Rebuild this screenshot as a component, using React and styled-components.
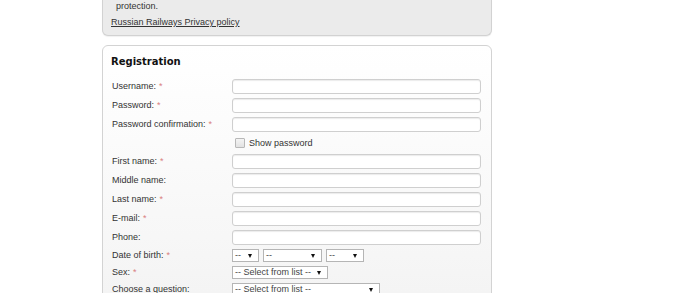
import React from "react";
import styled, { createGlobalStyle } from "styled-components";

const Global = createGlobalStyle`
  html, body { margin: 0; padding: 0; background: #fff; }
  body { font-family: "Liberation Sans", Arial, sans-serif; color: #333; }
`;

const Page = styled.div`
  width: 390px;
  margin-left: 102px;
  display: flex;
  flex-direction: column;
  gap: 9px;
`;

const InfoPanel = styled.div`
  background: #ebebeb;
  border: 1px solid #d2d2d2;
  border-top: none;
  border-radius: 0 0 6px 6px;
  padding: 1px 8px 7px 8px;
  box-shadow: 0 1px 1px rgba(0,0,0,0.06);
`;

const InfoLine = styled.div`
  font-size: 9px;
  line-height: 11px;
  padding-left: ${p => p.$indent || 0}px;
  margin-top: ${p => p.$mt || 0}px;
`;

const PrivacyLink = styled.a`
  color: #333;
  text-decoration: underline;
  font-size: 9px;
`;

const Panel = styled.div`
  border: 1px solid #d3d3d3;
  border-radius: 6px;
  background: linear-gradient(#ffffff 0%, #f7f7f7 60%, #f0f0f0 100%);
  padding: 8px 8px 10px 8px;
  min-height: 300px;
`;

const Heading = styled.h2`
  margin: 0 0 9px 0;
  font-family: "DejaVu Sans", Verdana, sans-serif;
  font-size: 10px;
  font-weight: bold;
  color: #111;
  line-height: 16px;
`;

const Form = styled.div`
  display: flex;
  flex-direction: column;
  gap: 4px;
  padding-left: 1px;
`;

const Row = styled.div`
  display: grid;
  grid-template-columns: 120px 1fr;
  align-items: center;
  height: ${p => p.$h || 15}px;
`;

const Control = styled.div`
  display: flex;
  align-items: center;
  height: 100%;
  font-size: 9px;
`;

const Label = styled.label`
  font-size: 9px;
  line-height: 11px;
  color: #333;
  white-space: nowrap;
`;

const Req = styled.span`
  color: #d98080;
  margin-left: 3px;
`;

const TextInput = styled.input`
  box-sizing: border-box;
  display: block;
  width: 249px;
  height: 15px;
  border: 1px solid #cfcfcf;
  border-radius: 3px;
  background: #fff;
  box-shadow: inset 0 1px 1px rgba(0,0,0,0.08);
  margin: 0;
  padding: 0 3px;
  font-size: 9px;
  outline: none;
`;

const CheckWrap = styled.div`
  display: flex;
  align-items: center;
  gap: 4px;
  padding-left: 3px;
  font-size: 9px;
  line-height: 11px;
  color: #333;
`;

const Box = styled.span`
  display: inline-block;
  width: 8px;
  height: 8px;
  border: 1px solid #b8b8b8;
  border-radius: 1px;
  background: linear-gradient(#f4f4f4, #e2e2e2);
`;

const Selects = styled.div`
  display: flex;
  gap: 4px;
`;

const SelectBox = styled.div`
  box-sizing: border-box;
  width: ${p => p.$w}px;
  height: 13px;
  border: 1px solid #b5b5b5;
  background: #fff;
  display: flex;
  align-items: center;
  justify-content: space-between;
  padding: 0 6px 0 2px;
  font-size: 9px;
  line-height: 11px;
  color: #444;
  white-space: nowrap;
`;

const Arrow = styled.span`
  width: 0;
  height: 0;
  border-left: 2.5px solid transparent;
  border-right: 2.5px solid transparent;
  border-top: 4px solid #111;
  margin-left: 3px;
`;

const Field = ({ label, req, children, h }) => (
  <Row $h={h}>
    <Label>
      {label}
      {req && <Req>*</Req>}
    </Label>
    <Control>{children}</Control>
  </Row>
);

const Select = ({ w, text }) => (
  <SelectBox $w={w}>
    <span>{text}</span>
    <Arrow />
  </SelectBox>
);

export default function App() {
  return (
    <>
      <Global />
      <Page>
        <InfoPanel>
          <InfoLine $indent={5}>protection.</InfoLine>
          <InfoLine $mt={5}>
            <PrivacyLink href="#">Russian Railways Privacy policy</PrivacyLink>
          </InfoLine>
        </InfoPanel>
        <Panel>
          <Heading>Registration</Heading>
          <Form>
            <Field label="Username:" req><TextInput /></Field>
            <Field label="Password:" req><TextInput type="password" /></Field>
            <Field label="Password confirmation:" req><TextInput type="password" /></Field>
            <Row $h={14}>
              <span />
              <CheckWrap><Box />Show password</CheckWrap>
            </Row>
            <Field label="First name:" req><TextInput /></Field>
            <Field label="Middle name:"><TextInput /></Field>
            <Field label="Last name:" req><TextInput /></Field>
            <Field label="E-mail:" req><TextInput /></Field>
            <Field label="Phone:"><TextInput /></Field>
            <Field label="Date of birth:" req h={13}>
              <Selects>
                <Select w={27} text="--" />
                <Select w={59} text="--" />
                <Select w={38} text="--" />
              </Selects>
            </Field>
            <Field label="Sex:" req h={13}>
              <Select w={96} text="-- Select from list --" />
            </Field>
            <Field label="Choose a question:" h={13}>
              <Select w={148} text="-- Select from list --" />
            </Field>
          </Form>
        </Panel>
      </Page>
    </>
  );
}
